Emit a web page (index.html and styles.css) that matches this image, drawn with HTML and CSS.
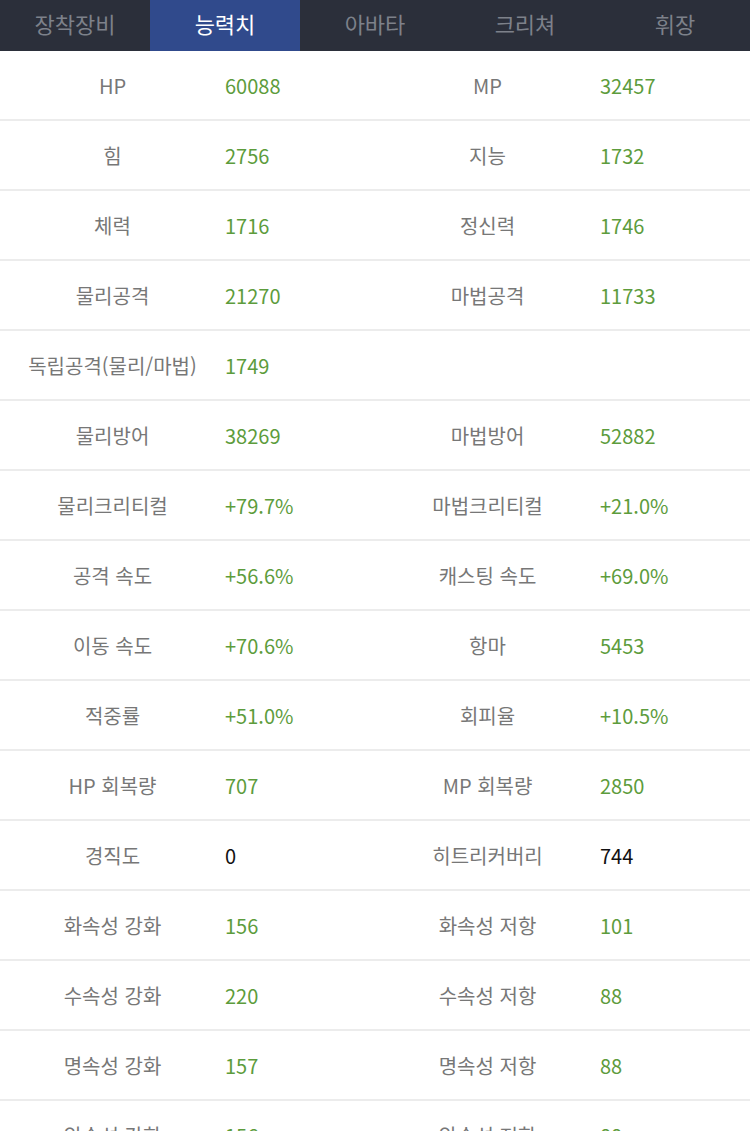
FILE: index.html
```html
<!DOCTYPE html>
<html lang="ko">
<head>
    <meta charset="UTF-8">
    <meta name="viewport" content="width=device-width, initial-scale=1.0">
    <title>능력치</title>
    <link rel="stylesheet" href="styles.css">
</head>
<body>
    <!-- Tabs -->
    <nav class="tabs">
        <div class="tab">장착장비</div>
        <div class="tab active">능력치</div>
        <div class="tab">아바타</div>
        <div class="tab">크리쳐</div>
        <div class="tab">휘장</div>
    </nav>

    <!-- Stat Table -->
    <div class="stats">
        <div class="row"><div class="label">HP</div><div class="value">60088</div><div class="label">MP</div><div class="value">32457</div></div>
        <div class="row"><div class="label">힘</div><div class="value">2756</div><div class="label">지능</div><div class="value">1732</div></div>
        <div class="row"><div class="label">체력</div><div class="value">1716</div><div class="label">정신력</div><div class="value">1746</div></div>
        <div class="row"><div class="label">물리공격</div><div class="value">21270</div><div class="label">마법공격</div><div class="value">11733</div></div>
        <div class="row"><div class="label">독립공격(물리/마법)</div><div class="value">1749</div><div class="label"></div><div class="value"></div></div>
        <div class="row"><div class="label">물리방어</div><div class="value">38269</div><div class="label">마법방어</div><div class="value">52882</div></div>
        <div class="row"><div class="label">물리크리티컬</div><div class="value">+79.7%</div><div class="label">마법크리티컬</div><div class="value">+21.0%</div></div>
        <div class="row"><div class="label">공격 속도</div><div class="value">+56.6%</div><div class="label">캐스팅 속도</div><div class="value">+69.0%</div></div>
        <div class="row"><div class="label">이동 속도</div><div class="value">+70.6%</div><div class="label">항마</div><div class="value">5453</div></div>
        <div class="row"><div class="label">적중률</div><div class="value">+51.0%</div><div class="label">회피율</div><div class="value">+10.5%</div></div>
        <div class="row"><div class="label">HP 회복량</div><div class="value">707</div><div class="label">MP 회복량</div><div class="value">2850</div></div>
        <div class="row"><div class="label">경직도</div><div class="value plain">0</div><div class="label">히트리커버리</div><div class="value plain">744</div></div>
        <div class="row"><div class="label">화속성 강화</div><div class="value">156</div><div class="label">화속성 저항</div><div class="value">101</div></div>
        <div class="row"><div class="label">수속성 강화</div><div class="value">220</div><div class="label">수속성 저항</div><div class="value">88</div></div>
        <div class="row"><div class="label">명속성 강화</div><div class="value">157</div><div class="label">명속성 저항</div><div class="value">88</div></div>
        <div class="row"><div class="label">암속성 강화</div><div class="value">156</div><div class="label">암속성 저항</div><div class="value">88</div></div>
    </div>
</body>
</html>
```

FILE: styles.css
```css
* {
    margin: 0;
    padding: 0;
    box-sizing: border-box;
}

body {
    font-family: 'Noto Sans CJK KR', 'Noto Sans', sans-serif;
    background: #fff;
    overflow: hidden;
}

/* Tabs */
.tabs {
    display: flex;
    height: 51px;
    background: #2b2f3a;
}

.tab {
    flex: 1;
    display: flex;
    align-items: center;
    justify-content: center;
    padding-bottom: 6px;
    font-size: 22px;
    color: #7d818a;
}

.tab.active {
    background: #304a8c;
    color: #fff;
}

/* Stat Rows */
.row {
    display: grid;
    grid-template-columns: 225px 150px 225px 150px;
    height: 70px;
    border-bottom: 2px solid #ececec;
    align-items: center;
    font-size: 20px;
}

.label {
    text-align: center;
    color: #777;
}

.value {
    color: #5d9c3c;
}

.value.plain {
    color: #111;
}
```
